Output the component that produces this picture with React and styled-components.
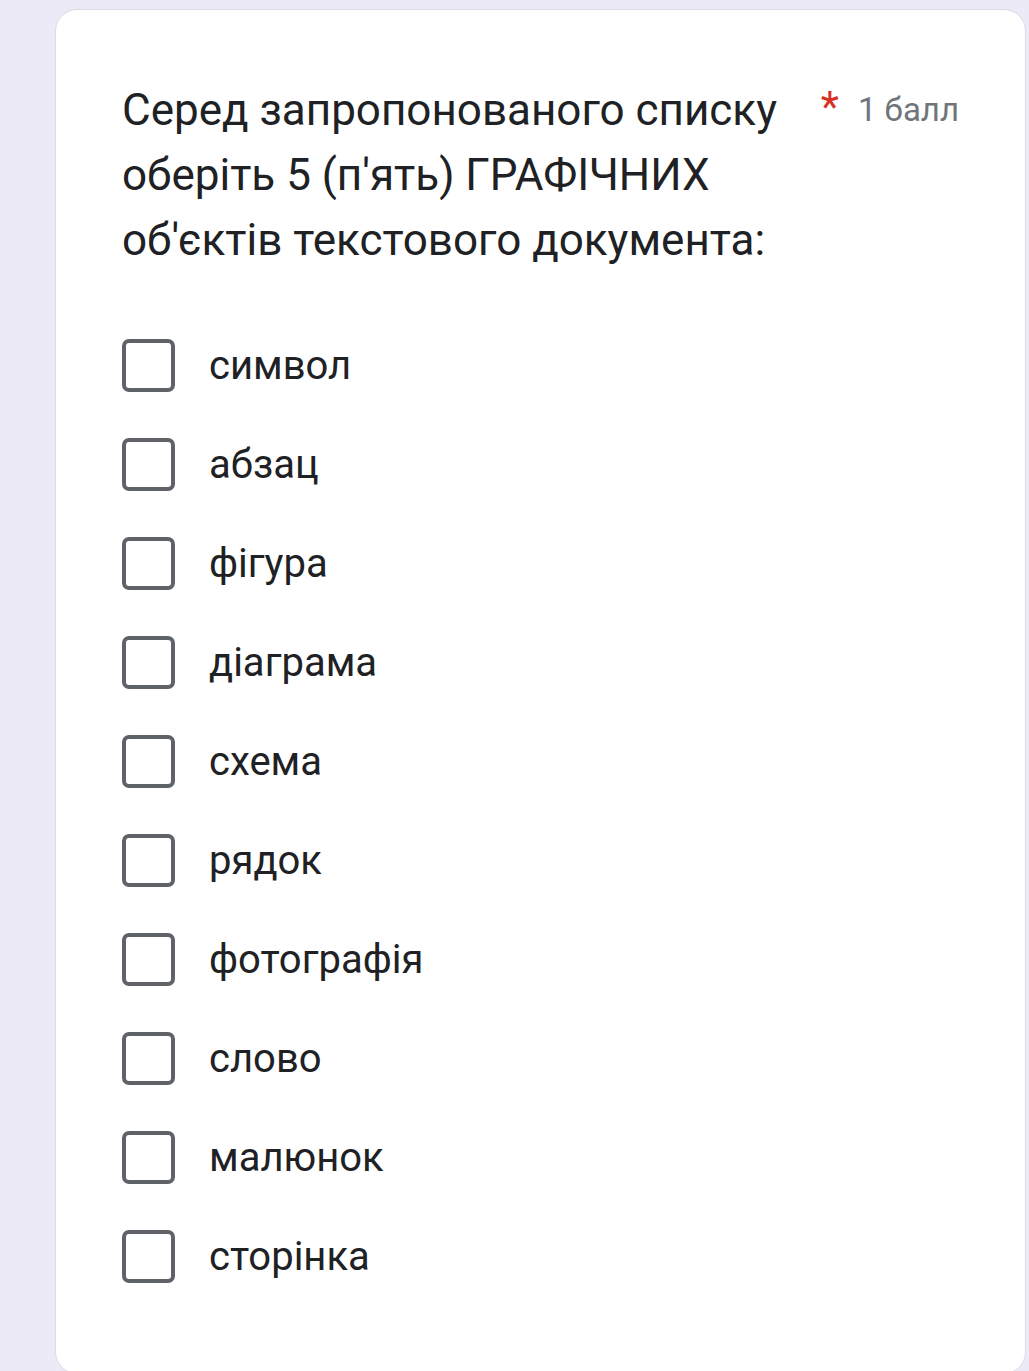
import React from 'react'
import styled, { createGlobalStyle } from "styled-components";

const options = [
    "символ",
    "абзац",
    "фігура",
    "діаграма",
    "схема",
    "рядок",
    "фотографія",
    "слово",
    "малюнок",
    "сторінка",
];

export default function App() {
    return (
        <>
        <GlobalStyle />
            <Page>
                <Card>
                    <Header>
                        <Question>
                            Серед запропонованого списку оберіть 5 (п'ять) ГРАФІЧНИХ об'єктів текстового документа:
                        </Question>
                        <Required>*</Required>
                        <Points>1 балл</Points>
                    </Header>
                    <OptionsList>
                        {options.map((option) => (
                            <Option key={option}>
                                <Checkbox />
                                <Label>{option}</Label>
                            </Option>
                        ))}
                    </OptionsList>
                </Card>
            </Page>
        </>
    )
}

const GlobalStyle = createGlobalStyle`
    html, body {
        margin: 0;
        padding: 0;
        background: #EDEAF7;
    }
    body {
        font-family: Roboto, "Noto Sans", sans-serif;
    }
`

const Page = styled.div`
    box-sizing: border-box;
    width: 1029px;
    height: 1371px;
    overflow: hidden;
    padding: 9px 3px 0 55px;
`

const Card = styled.div`
    box-sizing: border-box;
    width: 100%;
    height: 1365px;
    background: #FFFFFF;
    border: 1.5px solid #DADCE0;
    border-radius: 22px;
    padding: 68px 66px 0 66px;
`

const Header = styled.div`
    display: flex;
    align-items: flex-start;
`

const Question = styled.h1`
    margin: 0;
    width: 680px;
    font-family: Roboto, sans-serif;
    font-weight: 400;
    font-size: 44px;
    line-height: 65px;
    color: #202124;
`

const Required = styled.span`
    margin-left: 19px;
    font-family: Roboto, sans-serif;
    font-size: 42px;
    line-height: 58px;
    color: #D93025;
`

const Points = styled.span`
    margin-left: 19px;
    font-family: Roboto, sans-serif;
    font-size: 33px;
    line-height: 64px;
    color: #70757A;
    white-space: nowrap;
`

const OptionsList = styled.ul`
    list-style: none;
    margin: 0;
    padding: 0;
    margin-top: 66px;
    display: flex;
    flex-direction: column;
    gap: 46px;
`

const Option = styled.li`
    display: flex;
    align-items: center;
    height: 53px;
`

const Checkbox = styled.div`
    box-sizing: border-box;
    width: 53px;
    height: 53px;
    border: 4.5px solid #5F6368;
    border-radius: 7px;
    flex-shrink: 0;
`

const Label = styled.span`
    margin-left: 34px;
    font-family: Roboto, sans-serif;
    font-size: 40px;
    color: #202124;
`
